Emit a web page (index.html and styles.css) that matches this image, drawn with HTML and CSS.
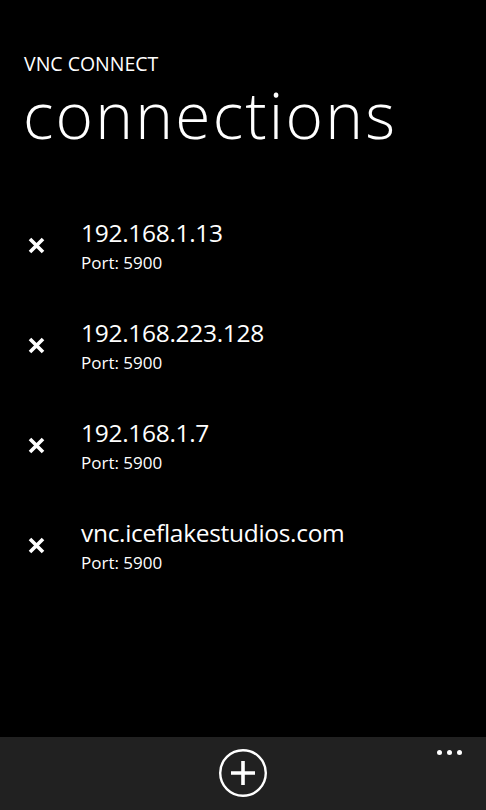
FILE: index.html
```html
<!DOCTYPE html>
<html>
<head>
<meta charset="utf-8">
<link rel="stylesheet" href="styles.css">
</head>
<body>
<div class="screen">
  <main class="page">
    <div class="app-name">VNC CONNECT</div>
    <h1 class="page-title">connections</h1>
    <ul class="list">
      <li class="item">
        <svg class="del" viewBox="0 0 17 17" width="17" height="17"><path d="M2 2 L15 15 M15 2 L2 15"/></svg>
        <div class="text"><div class="host">192.168.1.13</div><div class="port">Port: 5900</div></div>
      </li>
      <li class="item">
        <svg class="del" viewBox="0 0 17 17" width="17" height="17"><path d="M2 2 L15 15 M15 2 L2 15"/></svg>
        <div class="text"><div class="host">192.168.223.128</div><div class="port">Port: 5900</div></div>
      </li>
      <li class="item">
        <svg class="del" viewBox="0 0 17 17" width="17" height="17"><path d="M2 2 L15 15 M15 2 L2 15"/></svg>
        <div class="text"><div class="host">192.168.1.7</div><div class="port">Port: 5900</div></div>
      </li>
      <li class="item">
        <svg class="del" viewBox="0 0 17 17" width="17" height="17"><path d="M2 2 L15 15 M15 2 L2 15"/></svg>
        <div class="text"><div class="host">vnc.iceflakestudios.com</div><div class="port">Port: 5900</div></div>
      </li>
    </ul>
  </main>
  <footer class="appbar">
    <div class="spacer"></div>
    <svg class="add" viewBox="0 0 50 50" width="50" height="50">
      <circle cx="25" cy="25" r="22.8"/>
      <path d="M13 25 H37 M25 13 V37"/>
    </svg>
    <div class="more"><span></span><span></span><span></span></div>
  </footer>
</div>
</body>
</html>
```

FILE: styles.css
```css
html, body {
  margin: 0;
  padding: 0;
  background: #000;
  color: #fff;
  font-family: "Open Sans", "Noto Sans", sans-serif;
}
.screen {
  height: 810px;
  display: flex;
  flex-direction: column;
}
.page {
  flex: 1;
  padding: 52px 0 0 24px;
}
.app-name {
  font-size: 19.5px;
  line-height: 24px;
  font-weight: 400;
}
.page-title {
  margin: 9px 0 0 -1px;
  font-size: 64px;
  line-height: 60px;
  font-weight: 300;
  letter-spacing: 2.2px;
}
.list {
  list-style: none;
  margin: 72px 0 0 0;
  padding: 0;
  display: flex;
  flex-direction: column;
  gap: 43px;
}
.item {
  display: flex;
  align-items: center;
}
.del {
  margin-left: 4px;
  fill: none;
  stroke: #fff;
  stroke-width: 3.6;
}
.text {
  margin-left: 36px;
}
.host {
  font-size: 24.5px;
  line-height: 32px;
  letter-spacing: -0.3px;
}
.port {
  margin-top: 3px;
  font-size: 17px;
  line-height: 22px;
}
.appbar {
  height: 73px;
  background: #212121;
  display: grid;
  grid-template-columns: 1fr auto 1fr;
}
.add {
  margin-top: 11px;
  fill: none;
  stroke: #fff;
}
.add circle { stroke-width: 2.4; }
.add path { stroke-width: 3.6; }
.more {
  justify-self: end;
  display: flex;
  gap: 5px;
  margin: 13px 24px 0 0;
  height: 5px;
}
.more span {
  width: 5px;
  height: 5px;
  border-radius: 50%;
  background: #fff;
}
```
